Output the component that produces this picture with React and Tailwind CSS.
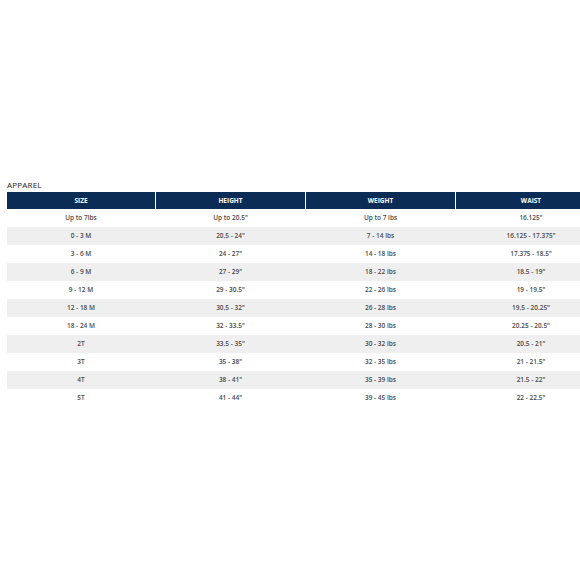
import React from 'react';

const rows = [
  ['Up to 7lbs', 'Up to 20.5"', 'Up to 7 lbs', '16.125"'],
  ['0 - 3 M', '20.5 - 24"', '7 - 14 lbs', '16.125 - 17.375"'],
  ['3 - 6 M', '24 - 27"', '14 - 18 lbs', '17.375 - 18.5"'],
  ['6 - 9 M', '27 - 29"', '18 - 22 lbs', '18.5 - 19"'],
  ['9 - 12 M', '29 - 30.5"', '22 - 26 lbs', '19 - 19.5"'],
  ['12 - 18 M', '30.5 - 32"', '26 - 28 lbs', '19.5 - 20.25"'],
  ['18 - 24 M', '32 - 33.5"', '28 - 30 lbs', '20.25 - 20.5"'],
  ['2T', '33.5 - 35"', '30 - 32 lbs', '20.5 - 21"'],
  ['3T', '35 - 38"', '32 - 35 lbs', '21 - 21.5"'],
  ['4T', '38 - 41"', '35 - 39 lbs', '21.5 - 22"'],
  ['5T', '41 - 44"', '39 - 45 lbs', '22 - 22.5"'],
];

const headers = ['SIZE', 'HEIGHT', 'WEIGHT', 'WAIST'];

export default function App() {
  return (
    <div className="w-[580px] h-[580px] bg-white overflow-hidden font-['Open_Sans',sans-serif]">
      <div className="pt-[179px] pl-[7px]">
        {/* Title */}
        <p className="text-[8px] leading-[12px] text-[#222] tracking-wide mb-[1px]">APPAREL</p>

        {/* Size chart */}
        <div className="w-[600px]">
          <div className="grid grid-cols-[148px_149px_149px_150px] gap-x-[1px] bg-white">
            {headers.map((h) => (
              <div
                key={h}
                className="h-[17px] bg-[#0b2d55] text-white text-[6.5px] font-bold flex items-center justify-center"
              >
                {h}
              </div>
            ))}
          </div>
          {rows.map((r, i) => (
            <div
              key={i}
              className={`grid grid-cols-[148px_149px_149px_150px] gap-x-[1px] ${
                i % 2 === 1 ? 'bg-[#f0f0f0]' : 'bg-white'
              }`}
            >
              {r.map((c, j) => (
                <div
                  key={j}
                  className={`h-[18px] flex items-center justify-center text-[6.5px] font-semibold text-[#4a4a4a] ${
                    i % 2 === 1 ? 'bg-[#efefef]' : 'bg-white'
                  }`}
                >
                  {c}
                </div>
              ))}
            </div>
          ))}
        </div>
      </div>
    </div>
  );
}
